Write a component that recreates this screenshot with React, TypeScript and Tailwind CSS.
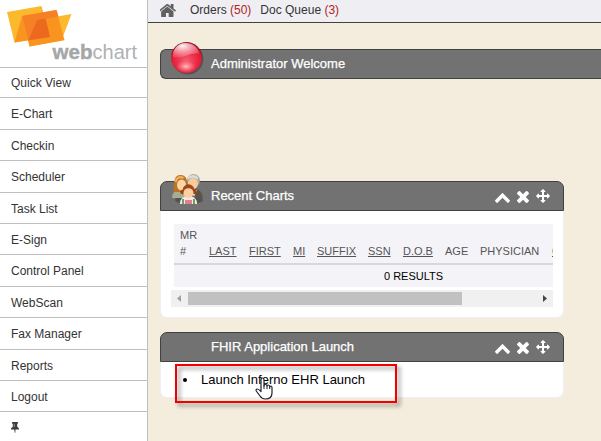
import React from "react";

const paths = {
  home: "M1408 992v480q0 26-19 45t-45 19h-384v-384h-256v384h-384q-26 0-45-19t-19-45v-480q0-1 .5-3t.5-3l575-474 575 474q1 2 1 6zm223-69l-62 74q-8 9-21 11h-3q-13 0-21-7l-692-577-692 577q-12 8-24 7-13-2-21-11l-62-74q-8-10-7-23.5t11-21.5l719-599q32-26 76-26t76 26l244 204v-195q0-14 9-23t23-9h192q14 0 23 9t9 23v408l219 182q10 8 11 21.5t-7 23.5z",
  up: "M1683 1331l-166 165q-19 19-45 19t-45-19l-531-531-531 531q-19 19-45 19t-45-19l-166-165q-19-19-19-45.5t19-45.5l742-741q19-19 45-19t45 19l742 741q19 19 19 45.5t-19 45.5z",
  times: "M1490 1322q0 40-28 68l-136 136q-28 28-68 28t-68-28l-294-294-294 294q-28 28-68 28t-68-28l-136-136q-28-28-28-68t28-68l294-294-294-294q-28-28-28-68t28-68l136-136q28-28 68-28t68 28l294 294 294-294q28-28 68-28t68 28l136 136q28 28 28 68t-28 68l-294 294 294 294q28 28 28 68z",
  arrows: "M1792 896q0 26-19 45l-256 256q-19 19-45 19t-45-19-19-45v-128h-384v384h128q26 0 45 19t19 45-19 45l-256 256q-19 19-45 19t-45-19l-256-256q-19-19-19-45t19-45 45-19h128v-384h-384v128q0 26-19 45t-45 19-45-19l-256-256q-19-19-19-45t19-45l256-256q19-19 45-19t45 19 19 45v128h384v-384h-128q-26 0-45-19t-19-45 19-45l256-256q19-19 45-19t45 19l256 256q19 19 19 45t-19 45-45 19h-128v384h384v-128q0-26 19-45t45-19 45 19l256 256q19 19 19 45z",
  pin: "M800 864v-448q0-14-9-23t-23-9-23 9-9 23v448q0 14 9 23t23 9 23-9 9-23zm672 352q0 26-19 45t-45 19h-429l-51 483q-2 12-10.5 20.5t-20.5 8.5h-1q-27 0-32-27l-76-485h-404q-26 0-45-19t-19-45q0-123 78.5-221.5t177.5-98.5v-512q-52 0-90-38t-38-90 38-90 90-38h640q52 0 90 38t38 90-38 90-90 38v512q99 0 177.5 98.5t78.5 221.5z",
};

function Icon({ d, box = "0 0 1792 1792", className }: { d: string; box?: string; className: string }) {
  return (
    <svg viewBox={box} preserveAspectRatio="none" className={`shrink-0 ${className}`} fill="currentColor">
      <path d={d} />
    </svg>
  );
}

const menu = [
  { label: "Quick View", h: "h-[30px]", pad: "pt-[8px]" },
  { label: "E-Chart", h: "h-[32px]", pad: "pt-[9px]" },
  { label: "Checkin", h: "h-[31px]", pad: "pt-[9px]" },
  { label: "Scheduler", h: "h-[32px]", pad: "pt-[9px]" },
  { label: "Task List", h: "h-[31px]", pad: "pt-[9px]" },
  { label: "E-Sign", h: "h-[31px]", pad: "pt-[9px]" },
  { label: "Control Panel", h: "h-[32px]", pad: "pt-[9px]" },
  { label: "WebScan", h: "h-[31px]", pad: "pt-[9px]" },
  { label: "Fax Manager", h: "h-[32px]", pad: "pt-[9px]" },
  { label: "Reports", h: "h-[31px]", pad: "pt-[9px]" },
  { label: "Logout", h: "h-[31px]", pad: "pt-[9px]" },
];

function Logo() {
  return (
    <svg width="147" height="67" viewBox="0 0 147 67" className="block shrink-0">
      <path d="M7 12 41.500 6 50 37 14.500 42.500Z" fill="#fdb92e" />
      <path d="M37 20 71.500 14 61.500 40.500 29 46.500Z" fill="#fdb92e" />
      <path d="M22 16 56.500 10 64.500 40.200 29.500 46.500Z" fill="#f9951e" />
      <path d="M22 16 14.500 42.500 28.500 40.200Z" fill="#f9951e" />
      <path d="M22 16 43.500 12.200 50 37 28.500 40.200Z" fill="#f58026" />
      <path d="M43.500 12.200 56.500 10 58.500 16.500 45 19Z" fill="#f58026" />
      <path d="M37 20 45.600 18.500 50 37 28.500 40.200Z" fill="#eb6a20" />
      <text x="52.500" y="58.500" fontSize="20" fontWeight="700" fill="#a5a6a9" stroke="#a5a6a9" strokeWidth=".4" fontFamily="Liberation Sans, sans-serif" textLength="40" lengthAdjust="spacingAndGlyphs">web</text>
      <text x="92.500" y="58.500" fontSize="20" fill="#b0b1b4" fontFamily="Liberation Sans, sans-serif" textLength="44.500" lengthAdjust="spacingAndGlyphs">chart</text>
    </svg>
  );
}

function Ball() {
  return (
    <svg viewBox="0 0 34 34" className="absolute left-[9px] -top-[9px] size-[34px]">
      <defs>
        <radialGradient id="ball" cx=".5" cy=".62" r=".56">
          <stop offset="0" stopColor="#f4606f" />
          <stop offset=".6" stopColor="#ea2a45" />
          <stop offset=".88" stopColor="#dc1a35" />
          <stop offset="1" stopColor="#9c1024" />
        </radialGradient>
        <radialGradient id="gloss" cx=".36" cy=".2" r=".85">
          <stop offset="0" stopColor="#fff" stopOpacity=".95" />
          <stop offset=".5" stopColor="#ffd5d9" stopOpacity=".6" />
          <stop offset="1" stopColor="#ff9aa4" stopOpacity=".2" />
        </radialGradient>
        <radialGradient id="glow">
          <stop offset="0" stopColor="#ffc4c8" stopOpacity=".95" />
          <stop offset="1" stopColor="#ff8893" stopOpacity="0" />
        </radialGradient>
      </defs>
      <circle cx="17.800" cy="18" r="15.500" fill="#222" opacity=".4" />
      <circle cx="16.500" cy="16.500" r="15.500" fill="url(#ball)" />
      <path d="M3 16.500C2 8 8 2.300 15 2c8-.3 13 4 14.500 10.500-7-.5-10 1-14.500 2.500-4 1.500-8 2-12 1.500Z" fill="url(#gloss)" />
      <ellipse cx="16" cy="25.500" rx="10" ry="6" fill="url(#glow)" />
    </svg>
  );
}

function People() {
  return (
    <svg viewBox="0 0 34 34" className="absolute left-[10px] -top-[9px] size-[34px]">
      <ellipse cx="18" cy="27" rx="14" ry="4" fill="#333" opacity=".5" />
      <path d="M1 25q0-7 7-8 8 0 9 8Z" fill="#a5ad93" />
      <path d="M17 25q1-9 8-9 6 1 7 9Z" fill="#5c5544" />
      <path d="m20 17 3 7 3-7Z" fill="#e9e5dc" />
      <path d="M2.500 19C3 7 3.500 2 9.500 2s7.500 6 7 14l-3 3H2.500Z" fill="#bd7327" />
      <path d="M4.500 9q2-7 8-4" stroke="#edb461" strokeWidth="2.200" fill="none" />
      <ellipse cx="10.500" cy="12" rx="4.500" ry="5.500" fill="#fbd5a6" />
      <circle cx="22.500" cy="7.500" r="6.500" fill="#a9a9a4" />
      <ellipse cx="22" cy="10.500" rx="5" ry="5.500" fill="#f8cb99" />
      <path d="M17 6.500q4-3.500 10 0V4q-5-4-10 0Z" fill="#dcdcd8" />
      <path d="M9 31q0-8 8.500-8 8.500 0 8.500 8Z" fill="#f7e6e2" />
      <path d="M12 31v-5M23 31v-5" stroke="#67a35b" strokeWidth="2" />
      <path d="M14 31v-4h7v4Z" fill="#e47c92" />
      <circle cx="11.500" cy="19" r="2.300" fill="#9b4319" />
      <circle cx="23.500" cy="19" r="2.300" fill="#9b4319" />
      <circle cx="17.500" cy="17" r="5.800" fill="#a3471b" />
      <ellipse cx="17.500" cy="20" rx="5" ry="4.800" fill="#fbd0a0" />
    </svg>
  );
}

function PanelHeader({ title, full = false, children }: { title: string; full?: boolean; children?: React.ReactNode }) {
  return (
    <div className={`relative flex h-[30px] items-center border border-[#414141] bg-[#727272] pl-[50px] text-white ${full ? "rounded-l-[6px] border-r-0" : "rounded-t-[7px] pr-[13px]"}`}>
      {children}
      <span className="grow text-[13px] leading-[16px] whitespace-nowrap [-webkit-text-stroke:0.25px_white]">{title}</span>
      {!full && (
        <div className="flex items-center">
          <Icon d={paths.up} box="90 480 1612 1035" className="mt-[3px] h-[10px] w-[15px]" />
          <Icon d={paths.times} box="302 366 1188 1188" className="mt-[2px] ml-[7px] h-[12px] w-[12px]" />
          <Icon d={paths.arrows} className="ml-[7px] h-[14px] w-[14px]" />
        </div>
      )}
    </div>
  );
}

const columns = [
  { label: "LAST", w: "w-[40px]", link: true },
  { label: "FIRST", w: "w-[44px]", link: true },
  { label: "MI", w: "w-[24px]", link: true },
  { label: "SUFFIX", w: "w-[51px]", link: true },
  { label: "SSN", w: "w-[35px]", link: true },
  { label: "D.O.B", w: "w-[42px]", link: true },
  { label: "AGE", w: "w-[35px]", link: false },
  { label: "PHYSICIAN", w: "w-[72px]", link: false },
  { label: "CITY", w: "w-[40px]", link: true },
];

export default function App() {
  return (
    <div className="flex h-[441px] w-[601px] overflow-hidden bg-[#f4ecdd] font-['Liberation_Sans',Arial,sans-serif]">
      <aside className="flex w-[148px] shrink-0 flex-col border-r border-[#c0c0c0] bg-white">
        <Logo />
        {menu.map((m) => (
          <div key={m.label} className={`${m.h} ${m.pad} shrink-0 border-t border-[#c0c0c0] pl-[11px] text-[12px] leading-[15px] text-[#333]`}>
            {m.label}
          </div>
        ))}
        <div className="grow border-t border-[#c0c0c0] pt-[10px] pl-[11px] text-[#3c3c3c]">
          <Icon d={paths.pin} box="320 128 1152 1664" className="h-[11px] w-[8px]" />
        </div>
      </aside>
      <main className="min-w-0 grow">
        <nav className="flex h-[23px] items-center border-b border-[#414141] bg-[#efeef3] pb-[2px] pl-[12px] text-[12px] text-[#333]">
          <Icon d={paths.home} box="150 253 1492 1283" className="h-[13px] w-[16px] text-[#606060]" />
          <span className="ml-[14px] whitespace-nowrap">Orders <span className="text-[#b32222]">(50)</span></span>
          <span className="ml-[9px] whitespace-nowrap">Doc Queue <span className="text-[#b32222]">(3)</span></span>
        </nav>
        <div className="pt-[26px] pl-[12px]">
          <PanelHeader full title="Administrator Welcome"><Ball /></PanelHeader>
          <section className="mt-[102px] w-[404px]">
            <PanelHeader title="Recent Charts"><People /></PanelHeader>
            <div className="h-[107px] rounded-b-[7px] border border-t-0 border-[#efeef3] bg-white pt-[13px] pl-[10px]">
              <div className="ml-[3px] w-[379px] overflow-hidden bg-[#f4f4f8]">
                <div className="flex h-[41px] w-[440px] items-end border-b-2 border-[#d8d8d8] pb-[4px] pl-[6px] text-[11px] leading-[16px] text-[#555]">
                  <span className="w-[29px]">MR<br />#</span>
                  {columns.map((c) => (
                    <span key={c.label} className={`${c.w} shrink-0 whitespace-nowrap`}>
                      <span className={c.link ? "underline" : ""}>{c.label}</span>
                    </span>
                  ))}
                </div>
                <div className="h-[22px] pl-[210px] text-[11px] leading-[22px] text-black">0 RESULTS</div>
              </div>
              <div className="mt-[3px] flex h-[17px] w-[382px] items-center bg-[#f0f0f0]">
                <svg viewBox="0 0 17 17" className="size-[17px]"><path d="M10 5v7L6 8.500Z" fill="#a0a0a0" /></svg>
                <div className="h-[13px] w-[274px] bg-[#c1c1c1]" />
                <svg viewBox="0 0 17 17" className="ml-auto size-[17px]"><path d="M7 5v7l4-3.500Z" fill="#454545" /></svg>
              </div>
            </div>
          </section>
          <section className="relative mt-[14px] w-[404px]">
            <PanelHeader title="FHIR Application Launch" />
            <div className="flex h-[36px] items-start rounded-b-[7px] border border-t-0 border-[#efeef3] bg-white pt-[10px] pl-[22px] text-[13px] leading-[16px] text-black">
              <span className="mt-[6px] size-[4px] rounded-full bg-black" />
              <span className="ml-[14px] whitespace-nowrap">Launch Inferno EHR Launch</span>
            </div>
            <div className="absolute top-[32px] left-[15px] h-[39px] w-[222px] border-2 border-[#f00000] [filter:drop-shadow(3px_3px_2px_rgba(0,0,0,.45))]" />
            <svg viewBox="0 0 18 23" className="absolute top-[45px] left-[95px] h-[23px] w-[18px]">
              <path d="M6 14V3Q6 1 7.500 1T9 3v6q0-1.500 1.500-1.500T12 9q0-1 1.300-1T14.700 10q0-1 1.100-1T17 10.500V16q0 6-6.500 6Q7 22 5 19L1.300 14Q.5 12.500 2 12q1.500-.2 4 2.500Z" fill="#fff" stroke="#20202c" strokeWidth="1.200" strokeLinejoin="round" />
              <path d="M9 8.500V12M12 9v3M14.700 10v2" stroke="#20202c" strokeWidth="1" />
            </svg>
          </section>
        </div>
      </main>
    </div>
  );
}
